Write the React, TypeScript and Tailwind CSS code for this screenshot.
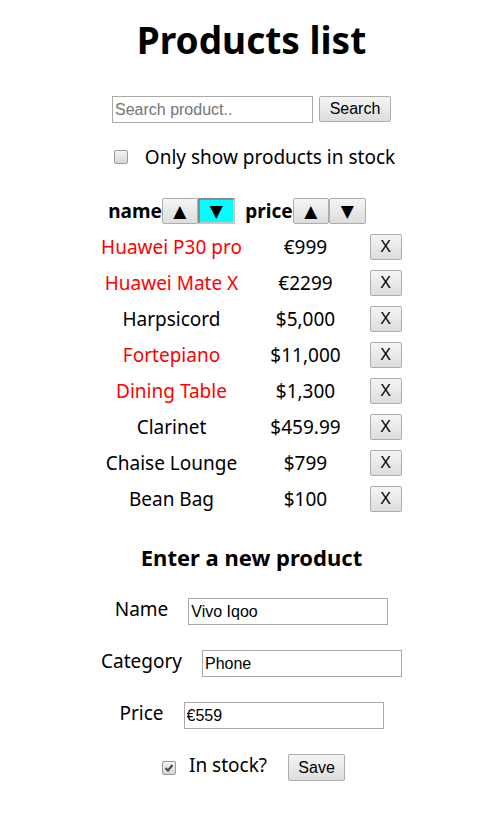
import React from "react";

type Product = { name: string; price: string; stocked: boolean };

const products: Product[] = [
  { name: "Huawei P30 pro", price: "€999", stocked: false },
  { name: "Huawei Mate X", price: "€2299", stocked: false },
  { name: "Harpsicord", price: "$5,000", stocked: true },
  { name: "Fortepiano", price: "$11,000", stocked: false },
  { name: "Dining Table", price: "$1,300", stocked: false },
  { name: "Clarinet", price: "$459.99", stocked: true },
  { name: "Chaise Lounge", price: "$799", stocked: true },
  { name: "Bean Bag", price: "$100", stocked: true },
];

const base =
  "h-[26px] border border-[#adadad] bg-linear-to-b from-[#f5f5f5] to-[#dddddd] rounded-[2px] text-black leading-none flex items-center justify-center";
const btn = base + " text-[16px] font-['Liberation_Sans',Arial,sans-serif]";
const arrow = "text-[17px] font-['DejaVu_Sans',sans-serif]";

const field =
  "h-[27px] w-[200px] border border-[#a9a9a9] bg-white px-[2px] text-[16px] text-black font-['Liberation_Sans',Arial,sans-serif] outline-none";

const Box = ({ checked }: { checked?: boolean }) => (
  <span className="w-[14px] h-[14px] rounded-[2px] border border-[#9a9a9a] bg-linear-to-b from-[#f2f2f2] to-[#d6d6d6] flex items-center justify-center">
    {checked && (
      <svg width="10" height="10" viewBox="0 0 10 10">
        <path d="M1.5 5 L4 7.5 L8.5 2" stroke="#444" strokeWidth="2" fill="none" />
      </svg>
    )}
  </span>
);

export default function App() {
  return (
    <div className="w-full text-center text-black text-[19px] font-['Noto_Sans',sans-serif]">
      <h1 className="pt-5 leading-10 text-[37px] font-bold">Products list</h1>

      <div className="mt-[36px] h-[26px] flex justify-center gap-[6px]">
        <input className={field + " w-[201px] h-[26px] placeholder:text-[#757575]"} placeholder="Search product.." readOnly />
        <button className={btn + " w-[72px]"}>Search</button>
      </div>

      <div className="mt-[22px] h-[26px] flex items-center justify-center gap-[17px] pl-[6px]">
        <Box />
        <span className="leading-none">Only show products in stock</span>
      </div>

      <div className="mx-auto w-[306px] mt-[28px]">
        <div className="h-[26px] flex items-center">
          <div className="w-[146px] flex items-center justify-center">
            <b className="leading-none">name</b>
            <button className={base + " w-[36px] " + arrow}>▲</button>
            <button className={"h-[26px] w-[37px] border-2 border-t-[#8a8a8a] border-l-[#8a8a8a] border-b-[#c8c8c8] border-r-[#c8c8c8] bg-[#00ffff] flex items-center justify-center leading-none " + arrow}>▼</button>
          </div>
          <div className="w-[122px] flex items-center justify-center">
            <b className="leading-none">price</b>
            <button className={base + " w-[36px] " + arrow}>▲</button>
            <button className={base + " w-[37px] " + arrow}>▼</button>
          </div>
        </div>

        <div className="mt-[5px]">
          {products.map((p) => (
            <div key={p.name} className="h-[36px] flex items-center">
              <span className={"w-[146px] leading-none whitespace-nowrap " + (p.stocked ? "" : "text-[#ff0000]")}>{p.name}</span>
              <span className="w-[122px] leading-none">{p.price}</span>
              <div className="w-[38px] flex justify-center">
                <button className={btn + " w-[32px]"}>X</button>
              </div>
            </div>
          ))}
        </div>
      </div>

      <h3 className="mt-[25px] h-[30px] leading-[30px] text-[22px] font-bold">Enter a new product</h3>

      <div className="mt-[26px] h-[27px] flex items-center justify-center gap-[20px]">
        <span className="leading-none -mt-1">Name</span>
        <input className={field} defaultValue="Vivo Iqoo" />
      </div>
      <div className="mt-[25px] h-[27px] flex items-center justify-center gap-[20px]">
        <span className="leading-none -mt-1">Category</span>
        <input className={field} defaultValue="Phone" />
      </div>
      <div className="mt-[25px] h-[27px] flex items-center justify-center gap-[20px]">
        <span className="leading-none -mt-1">Price</span>
        <input className={field} defaultValue="€559" />
      </div>

      <div className="mt-[25px] h-[27px] flex items-center justify-center pl-[4px]">
        <Box checked />
        <span className="ml-[13px] leading-none -mt-1">In stock?</span>
        <button className={btn + " w-[57px] ml-[21px] h-[27px]"}>Save</button>
      </div>
    </div>
  );
}
